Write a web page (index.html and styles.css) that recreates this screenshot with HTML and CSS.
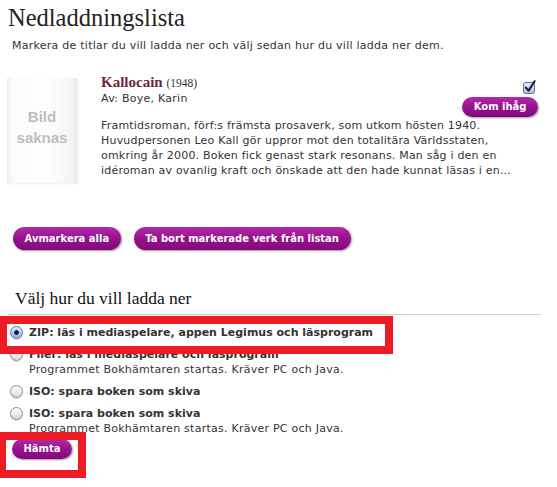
FILE: index.html
```html
<!DOCTYPE html>
<html lang="sv">
<head>
<meta charset="utf-8">
<title>Nedladdningslista</title>
<link rel="stylesheet" href="styles.css">
</head>
<body>
<div class="page">
  <h1 class="page-title">Nedladdningslista</h1>
  <p class="intro">Markera de titlar du vill ladda ner och välj sedan hur du vill ladda ner dem.</p>

  <div class="book">
    <div class="cover"><span class="cover-text">Bild<br>saknas</span></div>
    <div class="book-info">
      <div class="book-head">
        <div class="book-meta">
          <h2 class="book-title"><a href="#" class="book-link">Kallocain</a> <span class="book-year">(1948)</span></h2>
          <div class="book-author">Av: Boye, Karin</div>
        </div>
        <div class="book-tools">
          <span class="check" aria-label="Markerad">
            <svg width="14" height="14" viewBox="0 0 14 14">
              <defs>
                <linearGradient id="cbg" x1="0" y1="0" x2="0" y2="1">
                  <stop offset="0" stop-color="#e9f1fb"/>
                  <stop offset="1" stop-color="#9fbde6"/>
                </linearGradient>
              </defs>
              <rect x="0.5" y="2.5" width="11" height="11" rx="2" fill="url(#cbg)" stroke="#5f7597"/>
              <path d="M2.8 7.6 L5.6 10.6 L11.6 1.2" fill="none" stroke="#15192b" stroke-width="2" stroke-linecap="round" stroke-linejoin="round"/>
            </svg>
          </span>
          <button class="btn btn-small" type="button">Kom ihåg</button>
        </div>
      </div>
      <p class="book-desc">Framtidsroman, förf:s främsta prosaverk, som utkom hösten 1940.<br>Huvudpersonen Leo Kall gör uppror mot den totalitära Världsstaten,<br>omkring år 2000. Boken fick genast stark resonans. Man såg i den en<br>idéroman av ovanlig kraft och önskade att den hade kunnat läsas i en...</p>
    </div>
  </div>

  <div class="list-actions">
    <button class="btn btn-large" type="button">Avmarkera alla</button>
    <button class="btn btn-large" type="button">Ta bort markerade verk från listan</button>
  </div>

  <h3 class="choose-title">Välj hur du vill ladda ner</h3>

  <div class="options">
    <label class="option">
      <input type="radio" name="format" class="radio" checked>
      <span class="option-text"><span class="option-label">ZIP: läs i mediaspelare, appen Legimus och läsprogram</span></span>
    </label>
    <label class="option">
      <input type="radio" name="format" class="radio">
      <span class="option-text"><span class="option-label">Filer: läs i mediaspelare och läsprogram</span><span class="option-sub">Programmet Bokhämtaren startas. Kräver PC och Java.</span></span>
    </label>
    <label class="option">
      <input type="radio" name="format" class="radio">
      <span class="option-text"><span class="option-label">ISO: spara boken som skiva</span></span>
    </label>
    <label class="option">
      <input type="radio" name="format" class="radio">
      <span class="option-text"><span class="option-label">ISO: spara boken som skiva</span><span class="option-sub">Programmet Bokhämtaren startas. Kräver PC och Java.</span></span>
    </label>
  </div>

  <div class="submit-row">
    <button class="btn btn-small" type="button">Hämta</button>
  </div>

  <div class="mark mark-zip"></div>
  <div class="mark mark-get"></div>
</div>
</body>
</html>
```

FILE: styles.css
```css
* { box-sizing: border-box; }

html, body {
  margin: 0;
  padding: 0;
  background: #fff;
}

body {
  font-family: "DejaVu Sans", Verdana, sans-serif;
  font-size: 11px;
  color: #333;
}

.page {
  position: relative;
  width: 557px;
  min-height: 487px;
  padding: 0 16px 0 8px;
}

.page-title {
  margin: 3px 0 0;
  font-family: "Liberation Serif", "Times New Roman", serif;
  font-weight: normal;
  font-size: 24.5px;
  line-height: 30px;
  color: #222;
}

.intro {
  margin: 6px 0 0 4px;
  line-height: 14px;
  letter-spacing: 0.25px;
}

.book {
  display: flex;
  align-items: flex-start;
  gap: 24px;
  margin-top: 20px;
}

.cover {
  flex: none;
  width: 70px;
  height: 105px;
  margin: 5px 0 0 -1px;
  padding-top: 28px;
  text-align: center;
  background: linear-gradient(to right, #ebebeb 0, #f6f6f6 3px, #fcfcfc 8px, #fdfdfd 60%, #f4f4f4 93%, #e8e8e8 100%);
  box-shadow: 1px 1px 2px rgba(0, 0, 0, 0.07);
}

.cover-text {
  font-family: "Liberation Sans", Arial, sans-serif;
  font-weight: bold;
  font-size: 15px;
  line-height: 21px;
  color: #bdbdbd;
}

.book-info {
  flex: 1;
  min-width: 0;
}

.book-head {
  display: flex;
  justify-content: space-between;
  align-items: flex-start;
}

.book-title {
  margin: 0;
  font-family: "Liberation Serif", "Times New Roman", serif;
  font-size: 15px;
  line-height: 18px;
  font-weight: bold;
}

.book-link {
  color: #6d1f47;
  text-decoration: none;
}

.book-year {
  font-weight: normal;
  font-size: 11.5px;
  color: #333;
}

.book-author {
  line-height: 14px;
  letter-spacing: 0.25px;
}

.book-tools {
  display: flex;
  flex-direction: column;
  align-items: flex-end;
  margin-right: 3px;
}

.check {
  display: block;
  width: 14px;
  height: 14px;
  margin-top: 7px;
  margin-right: 1px;
}

.check svg { display: block; }

.book-tools .btn {
  margin-top: 3px;
}

.book-desc {
  margin: 1px 0 0;
  line-height: 15px;
  letter-spacing: 0.2px;
}

.btn {
  display: inline-block;
  height: 20px;
  padding: 0 11.5px;
  border: 0;
  border-radius: 11px;
  font-family: "DejaVu Sans", Verdana, sans-serif;
  font-weight: bold;
  font-size: 10px;
  line-height: 20px;
  color: #fff;
  background: linear-gradient(to bottom, #b12aa9 0%, #98128f 50%, #82087c 100%);
  box-shadow: 1px 1px 2px rgba(0, 0, 0, 0.4);
  cursor: pointer;
}

.btn-large {
  height: 23px;
  line-height: 23px;
  border-radius: 12px;
}

.list-actions {
  display: flex;
  gap: 13px;
  margin: 44px 0 0 5px;
}

.choose-title {
  margin: 37px 0 0;
  padding: 0 0 5px 7px;
  border-bottom: 1px solid #cfcfcf;
  font-family: "Liberation Serif", "Times New Roman", serif;
  font-weight: normal;
  font-size: 17.5px;
  line-height: 22px;
  color: #111;
}

.options {
  display: flex;
  flex-direction: column;
  gap: 7px;
  margin-top: 10px;
}

.option {
  display: flex;
  align-items: flex-start;
  gap: 6px;
  padding-left: 2px;
}

.radio {
  -webkit-appearance: none;
  appearance: none;
  flex: none;
  width: 13px;
  height: 13px;
  margin: 1px 0 0;
  border: 1px solid #8d8d8d;
  border-radius: 50%;
  background: linear-gradient(to bottom, #ffffff 0%, #ececec 55%, #d6d6d6 100%);
  box-shadow: 0 1px 1px rgba(0, 0, 0, 0.15);
}

.radio:checked {
  border-color: #5876a8;
  background:
    radial-gradient(circle at 50% 50%, #1a2440 0, #1a2440 2px, rgba(26, 36, 64, 0) 2.8px),
    linear-gradient(to bottom, #e3edf9 0%, #b4cdef 55%, #8fb0e0 100%);
}

.option-text {
  display: flex;
  flex-direction: column;
}

.option-label {
  font-weight: bold;
  line-height: 15px;
  color: #333;
}

.option-sub {
  line-height: 15px;
  letter-spacing: 0.25px;
}

.submit-row {
  margin: 3px 0 0 4px;
}

.mark {
  position: absolute;
  border: 8px solid #ed1c24;
  pointer-events: none;
}

.mark-zip {
  left: -1px;
  top: 313px;
  width: 394px;
  height: 38px;
}

.mark-get {
  left: -2px;
  top: 429px;
  width: 88px;
  height: 46px;
}
```
